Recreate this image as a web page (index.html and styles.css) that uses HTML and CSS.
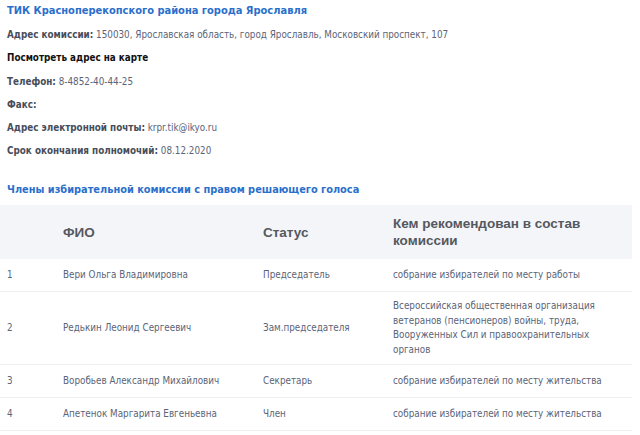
FILE: index.html
```html
<!DOCTYPE html>
<html lang="ru">
<head>
<meta charset="utf-8">
<link rel="stylesheet" href="styles.css">
</head>
<body>
<div class="page">
  <div class="info">
    <h1 class="title">ТИК Красноперекопского района города Ярославля</h1>
    <p class="line"><b class="lbl">Адрес комиссии:</b> <span class="val">150030, Ярославская область, город Ярославль, Московский проспект, 107</span></p>
    <p class="line"><b class="map">Посмотреть адрес на карте</b></p>
    <p class="line"><b class="lbl">Телефон:</b> <span class="val">8-4852-40-44-25</span></p>
    <p class="line"><b class="lbl">Факс:</b></p>
    <p class="line"><b class="lbl">Адрес электронной почты:</b> <span class="val">krpr.tik@ikyo.ru</span></p>
    <p class="line"><b class="lbl">Срок окончания полномочий:</b> <span class="val">08.12.2020</span></p>
  </div>
  <h2 class="section">Члены избирательной комиссии с правом решающего голоса</h2>
  <table class="members">
    <colgroup>
      <col class="c-num"><col class="c-name"><col class="c-status"><col class="c-rec">
    </colgroup>
    <thead>
      <tr><th></th><th>ФИО</th><th>Статус</th><th>Кем рекомендован в состав комиссии</th></tr>
    </thead>
    <tbody>
      <tr><td>1</td><td>Вери Ольга Владимировна</td><td>Председатель</td><td>собрание избирателей по месту работы</td></tr>
      <tr><td>2</td><td>Редькин Леонид Сергеевич</td><td>Зам.председателя</td><td>Всероссийская общественная организация ветеранов (пенсионеров) войны, труда, Вооруженных Сил и правоохранительных органов</td></tr>
      <tr><td>3</td><td>Воробьев Александр Михайлович</td><td>Секретарь</td><td>собрание избирателей по месту жительства</td></tr>
      <tr><td>4</td><td>Апетенок Маргарита Евгеньевна</td><td>Член</td><td>собрание избирателей по месту жительства</td></tr>
    </tbody>
  </table>
</div>
</body>
</html>
```
FILE: styles.css
```css
* { box-sizing: border-box; }
html, body { margin: 0; padding: 0; background: #fff; }
body { font-family: "DejaVu Sans Condensed", "DejaVu Sans", sans-serif; font-size: 9.8px; color: #5b6478; }
.page { width: 632px; }
.info { padding: 3px 7px 0; }
.title { margin: 0 0 9px; font-size: 11px; font-weight: bold; color: #2a6fcb; line-height: 16px; }
.line { margin: 0; height: 23.3px; line-height: 14px; }
.lbl { color: #474d5a; font-weight: bold; }
.map { color: #111; font-weight: bold; }
.val { color: #5b6478; }
.section { margin: 14px 0 0 7px; font-size: 10.9px; font-weight: bold; color: #2a6fcb; line-height: 16px; }
.members { margin-top: 7px; width: 632px; border-collapse: collapse; table-layout: fixed; }
.c-num { width: 56px; } .c-name { width: 200px; } .c-status { width: 130px; } .c-rec { width: 246px; }
.members th { background: #f3f5f8; font-family: "Liberation Sans", Arial, sans-serif; font-size: 13.5px; font-weight: bold; color: #55585f; text-align: left; padding: 9px 20px 8px 7px; height: 54px; line-height: 17px; }
.members td { padding: 7px 20px 7px 7px; height: 33px; line-height: 14.5px; border-bottom: 1px solid #eef0f3; vertical-align: middle; }
```
